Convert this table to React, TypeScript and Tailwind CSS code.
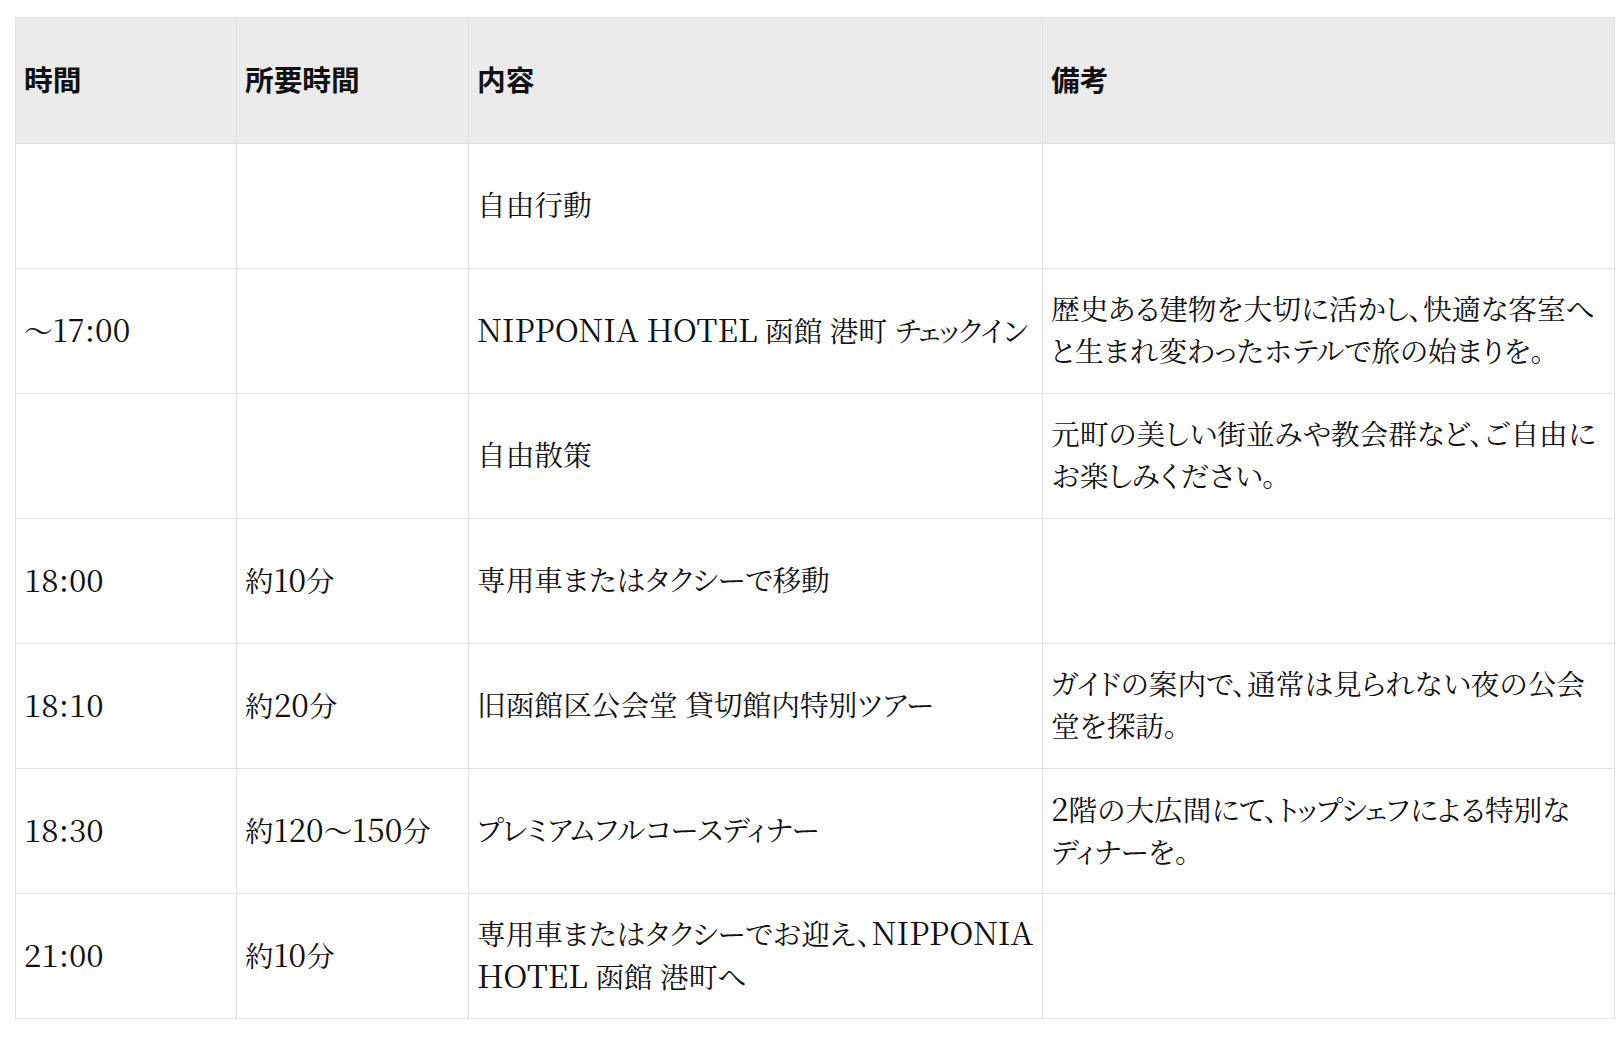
const rows: { time: string; dur: string; content: string[]; note: string[] }[] = [
  { time: "", dur: "", content: ["自由行動"], note: [] },
  {
    time: "～17:00",
    dur: "",
    content: ["NIPPONIA HOTEL 函館 港町 チェックイン"],
    note: ["歴史ある建物を大切に活かし、快適な客室へ", "と生まれ変わったホテルで旅の始まりを。"],
  },
  {
    time: "",
    dur: "",
    content: ["自由散策"],
    note: ["元町の美しい街並みや教会群など、ご自由に", "お楽しみください。"],
  },
  { time: "18:00", dur: "約10分", content: ["専用車またはタクシーで移動"], note: [] },
  {
    time: "18:10",
    dur: "約20分",
    content: ["旧函館区公会堂 貸切館内特別ツアー"],
    note: ["ガイドの案内で、通常は見られない夜の公会", "堂を探訪。"],
  },
  {
    time: "18:30",
    dur: "約120～150分",
    content: ["プレミアムフルコースディナー"],
    note: ["2階の大広間にて、トップシェフによる特別な", "ディナーを。"],
  },
  {
    time: "21:00",
    dur: "約10分",
    content: ["専用車またはタクシーでお迎え、NIPPONIA", "HOTEL 函館 港町へ"],
    note: [],
  },
];

// latin runs render a bit larger than the kana/kanji in the source
function Mixed({ text }: { text: string }) {
  const parts = text.split(/([A-Za-z0-9:]+(?: [A-Za-z0-9:]+)*)/);
  return (
    <>
      {parts.map((p, i) =>
        i % 2 === 1 ? (
          <span key={i} className="text-[31.5px]">
            {p}
          </span>
        ) : (
          p
        )
      )}
    </>
  );
}

function Lines({ lines }: { lines: string[] }) {
  return (
    <>
      {lines.map((line, j) => (
        <div key={j} className="whitespace-nowrap">
          <Mixed text={line} />
        </div>
      ))}
    </>
  );
}

const cell = "border border-[#e2e2e2] px-2 pb-1 align-middle text-left";

export default function App() {
  return (
    <div className="min-h-screen bg-white pl-[15px] pt-[17px] text-[28.7px] leading-[42px] text-[#111] [font-family:'Noto_Serif_CJK_JP',serif] [font-feature-settings:'palt']">
      <table className="w-[1600px] table-fixed border-collapse">
        <colgroup>
          <col className="w-[221px]" />
          <col className="w-[232px]" />
          <col className="w-[574px]" />
          <col />
        </colgroup>
        <thead>
          <tr className="h-[126px] bg-[#ebebeb] [font-family:'Noto_Sans_CJK_JP',sans-serif]">
            <th className={`${cell} font-bold`}>時間</th>
            <th className={`${cell} font-bold`}>所要時間</th>
            <th className={`${cell} font-bold`}>内容</th>
            <th className={`${cell} font-bold`}>備考</th>
          </tr>
        </thead>
        <tbody>
          {rows.map((r, i) => (
            <tr key={i} className="h-[125px]">
              <td className={cell}>
                <Mixed text={r.time} />
              </td>
              <td className={cell}>
                <Mixed text={r.dur} />
              </td>
              <td className={cell}>
                <Lines lines={r.content} />
              </td>
              <td className={cell}>
                <Lines lines={r.note} />
              </td>
            </tr>
          ))}
        </tbody>
      </table>
    </div>
  );
}
